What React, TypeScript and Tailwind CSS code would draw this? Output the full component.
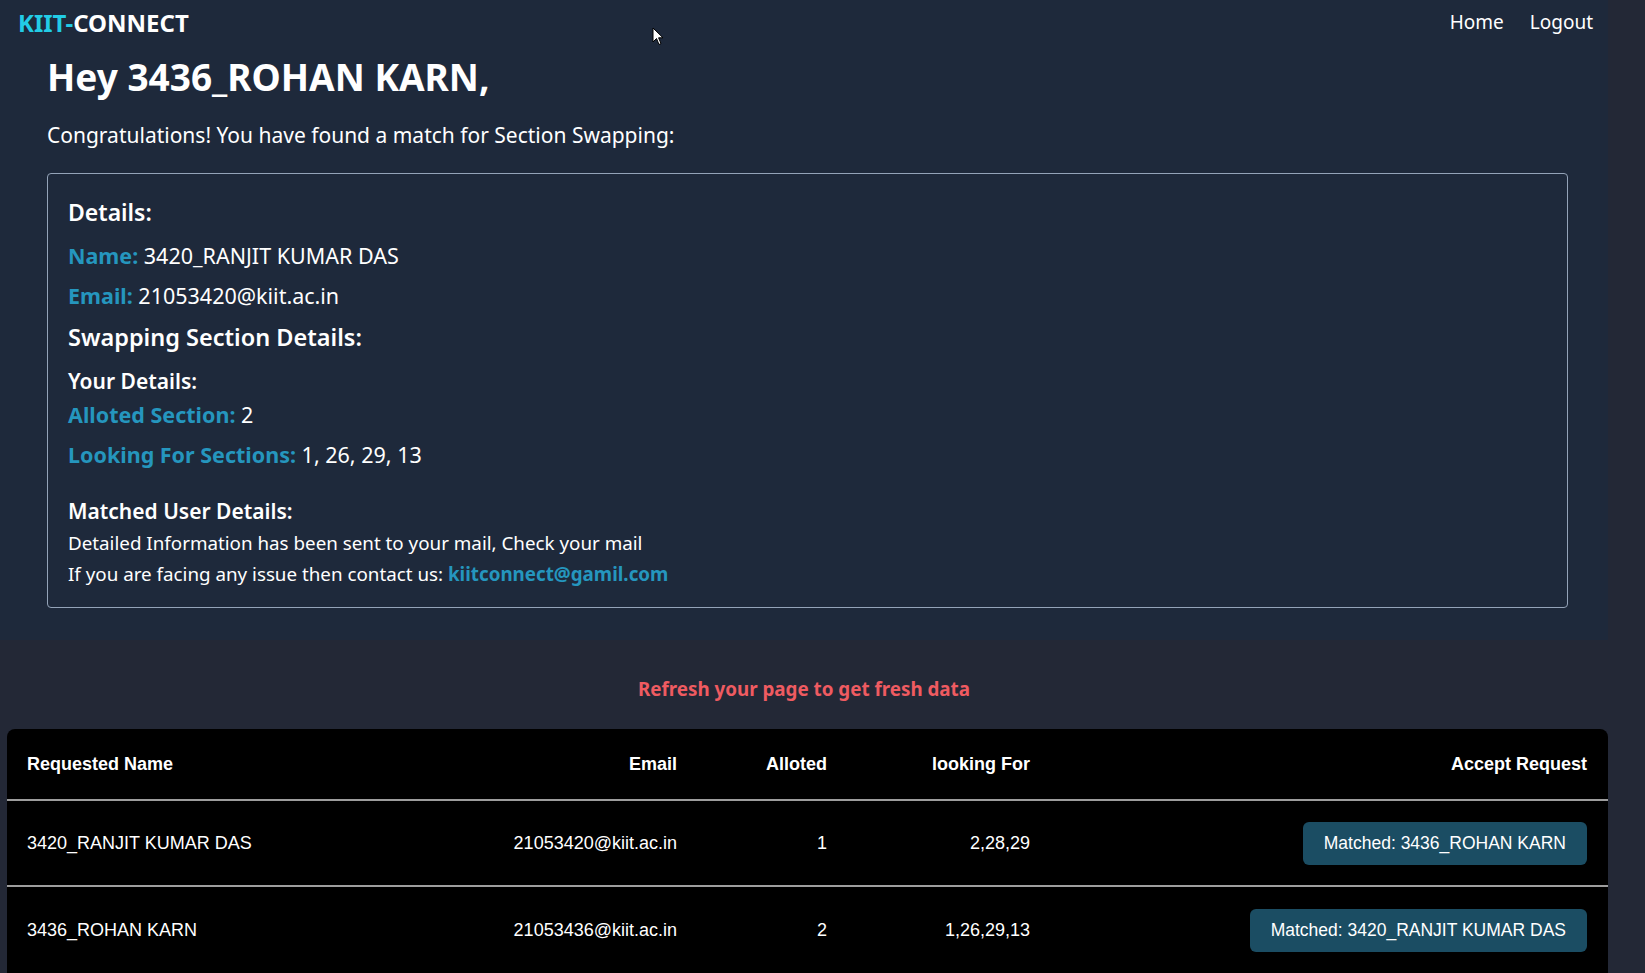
import React from "react";

const rows = [
  {
    name: "3420_RANJIT KUMAR DAS",
    email: "21053420@kiit.ac.in",
    alloted: "1",
    looking: "2,28,29",
    matched: "Matched: 3436_ROHAN KARN",
  },
  {
    name: "3436_ROHAN KARN",
    email: "21053436@kiit.ac.in",
    alloted: "2",
    looking: "1,26,29,13",
    matched: "Matched: 3420_RANJIT KUMAR DAS",
  },
];

export default function App() {
  return (
    <div className="relative min-h-screen w-full overflow-hidden bg-[#232836] font-['Noto_Sans','Open_Sans',sans-serif] text-white">
      <div className="w-[1608px]">
        <div className="bg-[#1e293b] pb-[32px]">
          <nav className="flex h-[45px] items-center justify-between pl-[18px] pr-[15px]">
            <div className="text-[24px] font-bold leading-none">
              <span className="text-[#22cce6]">KIIT-</span>
              <span className="text-white">CONNECT</span>
            </div>
            <div className="flex items-center gap-[26px] text-[19px] leading-none text-white">
              <span>Home</span>
              <span>Logout</span>
            </div>
          </nav>
          <main className="pl-[47px] pr-[40px]">
            <h1 className="mt-[10px] text-[37px] font-bold leading-[44px]">Hey 3436_ROHAN KARN,</h1>
            <p className="mt-[22px] text-[21px] leading-[28px]">
              Congratulations! You have found a match for Section Swapping:
            </p>
            <section className="mt-[24px] flex flex-col rounded-[4px] border border-[#94a3b8] pb-[19px] pl-[20px] pt-[22px]">
              <h2 className="text-[23px] font-semibold leading-[32px]">Details:</h2>
              <p className="mt-[13px] text-[21.5px] leading-[30px]">
                <span className="font-bold text-[#2596be]">Name:</span> 3420_RANJIT KUMAR DAS
              </p>
              <p className="mt-[10px] text-[21.5px] leading-[30px]">
                <span className="font-bold text-[#2596be]">Email:</span> 21053420@kiit.ac.in
              </p>
              <h2 className="mt-[10px] text-[23.5px] font-semibold leading-[32px]">Swapping Section Details:</h2>
              <h3 className="mt-[14px] text-[21px] font-semibold leading-[28px]">Your Details:</h3>
              <p className="mt-[5px] text-[21.5px] leading-[30px]">
                <span className="font-bold text-[#2596be]">Alloted Section:</span> 2
              </p>
              <p className="mt-[10px] text-[21.5px] leading-[30px]">
                <span className="font-bold text-[#2596be]">Looking For Sections:</span> 1, 26, 29, 13
              </p>
              <h3 className="mt-[27px] text-[21px] font-semibold leading-[28px]">Matched User Details:</h3>
              <p className="mt-[4px] text-[18.8px] leading-[28px]">
                Detailed Information has been sent to your mail, Check your mail
              </p>
              <p className="mt-[3px] text-[18.8px] leading-[28px]">
                If you are facing any issue then contact us:{" "}
                <span className="font-bold text-[#2596be]">kiitconnect@gamil.com</span>
              </p>
            </section>
          </main>
        </div>

        <p className="mt-[36px] text-center text-[18.8px] font-bold leading-[26px] text-[#ef5b61]">
          Refresh your page to get fresh data
        </p>

        <div className="ml-[7px] mt-[27px] rounded-t-[8px] bg-black font-['Liberation_Sans',Arial,sans-serif] text-[18px] text-white">
          <div className="grid h-[72px] grid-cols-[350px_300px_150px_203px_557px] items-center border-b-2 border-[#9d9d9d] px-[20px] font-bold">
            <div>Requested Name</div>
            <div className="text-right">Email</div>
            <div className="text-right">Alloted</div>
            <div className="text-right">looking For</div>
            <div className="text-right">Accept Request</div>
          </div>
          {rows.map((r, i) => (
            <div
              key={r.name}
              className={
                i === 0
                  ? "grid h-[86px] grid-cols-[350px_300px_150px_203px_557px] items-center border-b-2 border-[#9d9d9d] px-[20px]"
                  : "grid h-[86px] grid-cols-[350px_300px_150px_203px_557px] items-center px-[20px]"
              }
            >
              <div>{r.name}</div>
              <div className="text-right">{r.email}</div>
              <div className="text-right">{r.alloted}</div>
              <div className="text-right">{r.looking}</div>
              <div className="flex justify-end">
                <button className="h-[43px] rounded-[6px] bg-[#1b4d63] px-[21px] text-[17.5px] text-white">
                  {r.matched}
                </button>
              </div>
            </div>
          ))}
        </div>
      </div>

      <svg
        className="absolute left-[652px] top-[27px]"
        width="12"
        height="19"
        viewBox="0 0 12 19"
      >
        <path d="M1 1 L1 15 L4.5 11.5 L7 17.5 L9 16.6 L6.6 10.8 L11 10.8 Z" fill="white" stroke="black" strokeWidth="1" />
      </svg>
    </div>
  );
}
